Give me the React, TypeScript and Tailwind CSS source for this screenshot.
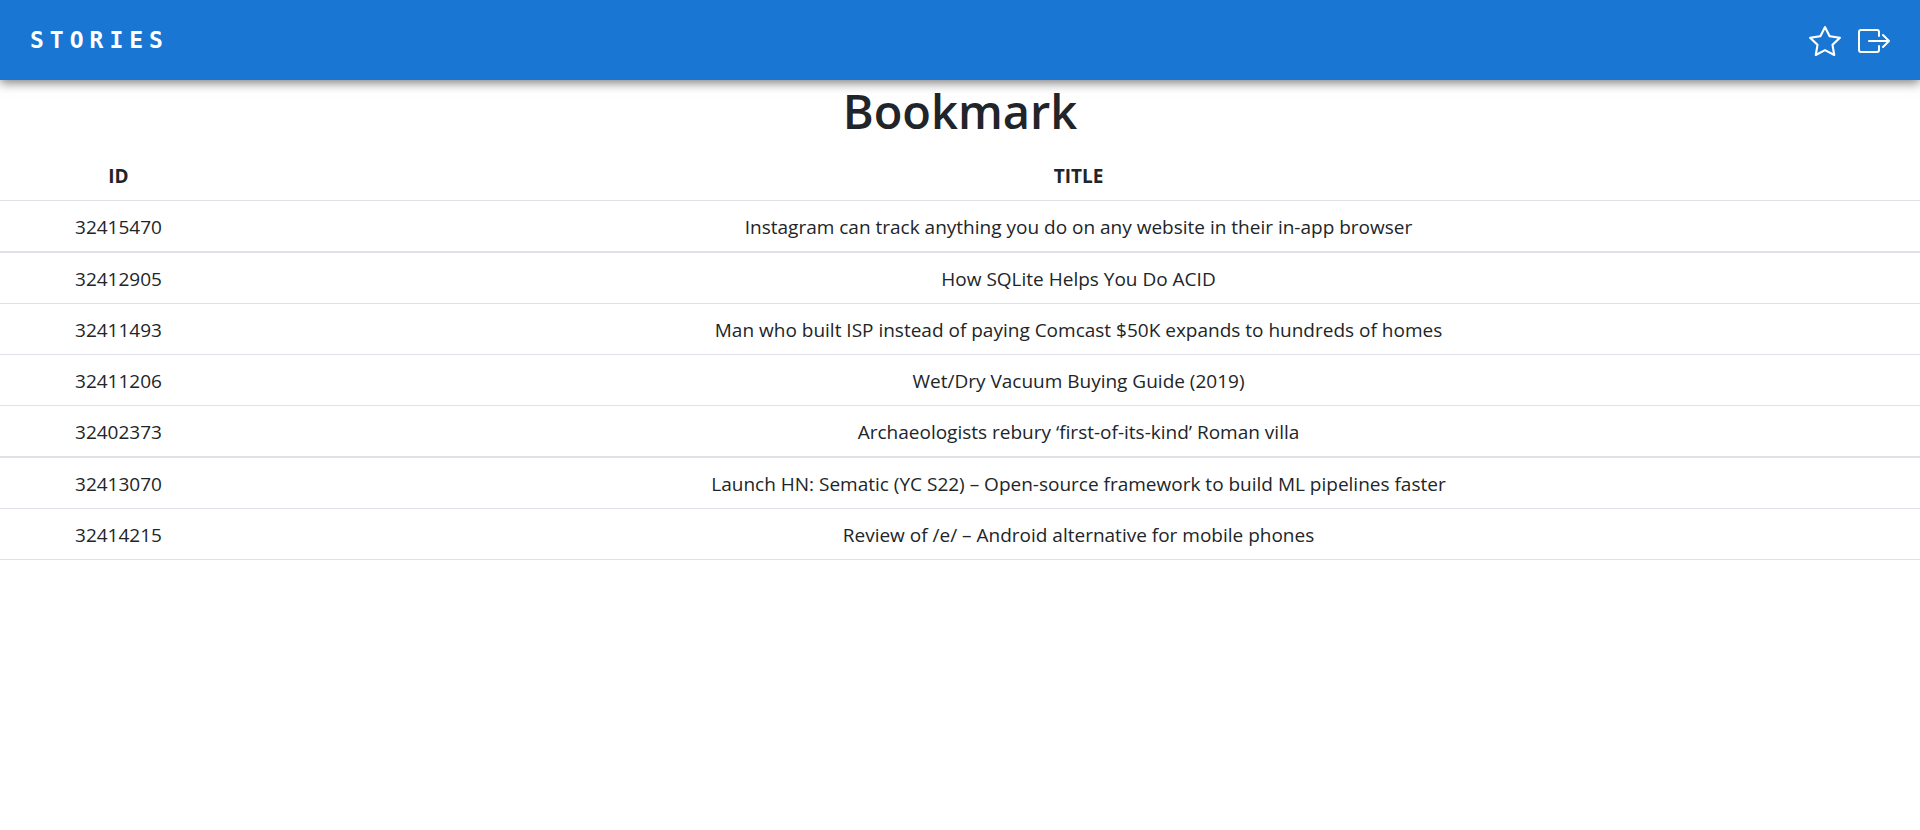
import { BsStar, BsBoxArrowRight } from "react-icons/bs";

type Story = { id: number; title: string; row: string };

const thin = "h-[51px] border-b border-[#dee2e6]";
const thick = "h-[52px] border-b-2 border-[#dee2e6]";

const stories: Story[] = [
  { id: 32415470, title: "Instagram can track anything you do on any website in their in-app browser", row: thick },
  { id: 32412905, title: "How SQLite Helps You Do ACID", row: thin },
  { id: 32411493, title: "Man who built ISP instead of paying Comcast $50K expands to hundreds of homes", row: thin },
  { id: 32411206, title: "Wet/Dry Vacuum Buying Guide (2019)", row: thin },
  { id: 32402373, title: "Archaeologists rebury ‘first-of-its-kind’ Roman villa", row: thick },
  { id: 32413070, title: "Launch HN: Sematic (YC S22) – Open-source framework to build ML pipelines faster", row: thin },
  { id: 32414215, title: "Review of /e/ – Android alternative for mobile phones", row: thin },
];

function Header() {
  return (
    <header className="relative flex h-20 items-center justify-between bg-[#1976d2] px-[30px] text-white shadow-[0_3px_10px_rgba(0,0,0,0.5)]">
      <a href="#stories" className="font-['DejaVu_Sans_Mono',monospace] text-[23px] font-bold tracking-[6px]">
        STORIES
      </a>
      <nav className="flex items-center gap-[17px] pt-[2px]">
        <a href="#bookmarks" aria-label="Bookmarks">
          <BsStar className="size-8" />
        </a>
        <button type="button" aria-label="Log out">
          <BsBoxArrowRight className="size-8" />
        </button>
      </nav>
    </header>
  );
}

export default function App() {
  return (
    <div className="bg-white font-['Open_Sans',sans-serif] text-[#212529]">
      <Header />
      <main>
        <h1 className="mb-2 text-center text-[47px] leading-[62px] font-semibold">Bookmark</h1>
        <table className="w-full border-collapse text-center text-[19px] leading-[30px]">
          <thead>
            <tr className="h-[50px] border-b border-[#dee2e6]">
              <th scope="col" className="w-[237px] pt-[3px] font-bold">ID</th>
              <th scope="col" className="pt-[3px] font-bold">TITLE</th>
            </tr>
          </thead>
          <tbody>
            {stories.map((story) => (
              <tr key={story.id} className={story.row}>
                <td className="pt-[2px]">{story.id}</td>
                <td className="pt-[2px]">{story.title}</td>
              </tr>
            ))}
          </tbody>
        </table>
      </main>
    </div>
  );
}
